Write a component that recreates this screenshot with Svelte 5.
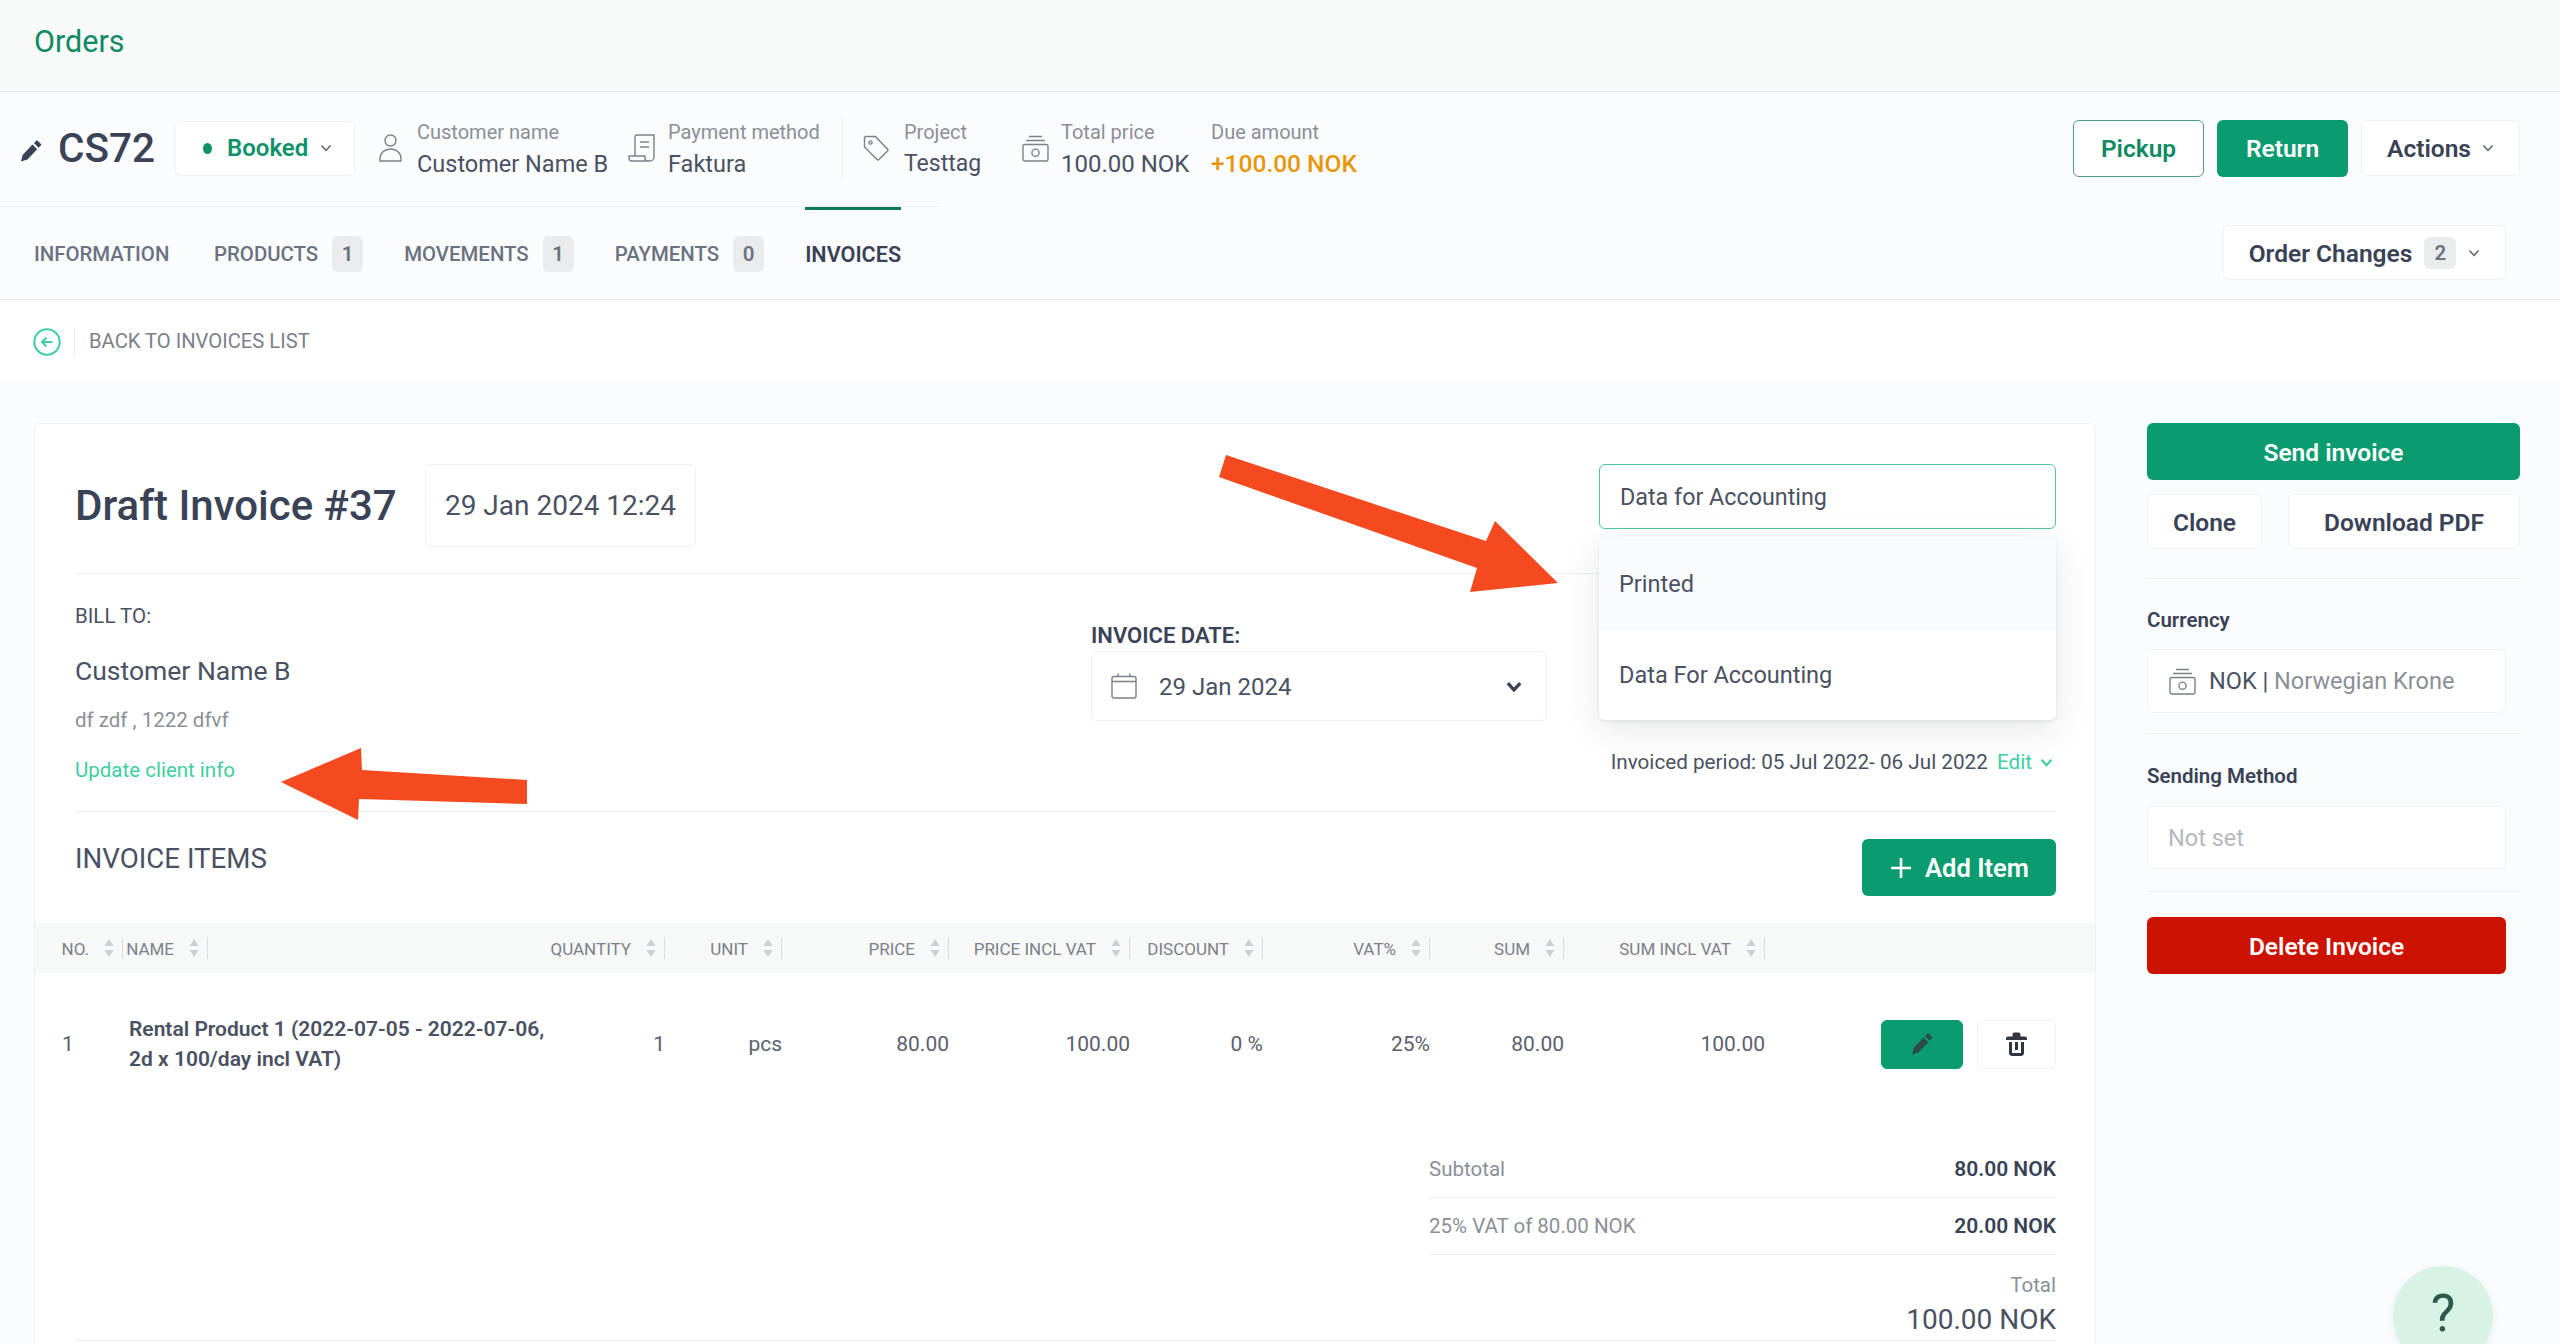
<script lang="ts">
  const tabs = [
    { label: "INFORMATION" },
    { label: "PRODUCTS", count: 1 },
    { label: "MOVEMENTS", count: 1 },
    { label: "PAYMENTS", count: 0 },
    { label: "INVOICES", active: true },
  ];

  const columns = ["NO.", "NAME", "QUANTITY", "UNIT", "PRICE", "PRICE INCL VAT", "DISCOUNT", "VAT%", "SUM", "SUM INCL VAT"];
  const cells = ["1", "pcs", "80.00", "100.00", "0 %", "25%", "80.00", "100.00"];
</script>

{#snippet chevron(cls = "")}
  <svg class="chevron {cls}" viewBox="0 0 12 8" aria-hidden="true"><path d="M1.5 1.5 6 6.5l4.5-5" /></svg>
{/snippet}

{#snippet pencil(cls = "")}
  <svg class={cls} viewBox="0 0 22 22" aria-hidden="true">
    <path d="M1 21.5 2.6 15 12.5 4.6l4.7 4.6-9.8 10.3z" />
    <path d="M14 3 16.3.7a1 1 0 0 1 1.4 0l3.3 3.2a1 1 0 0 1 0 1.4l-2.4 2.4z" />
  </svg>
{/snippet}

{#snippet money()}
  <svg class="line-icon money" viewBox="0 0 27 27" aria-hidden="true">
    <path d="M7 1.5h13M4 5.5h19" />
    <rect x="1" y="9.5" width="25" height="16.5" rx="2" />
    <circle cx="13.5" cy="17.7" r="3.6" />
  </svg>
{/snippet}

<div class="page">
  <header class="topbar">Orders</header>

  <section class="order-head">
    <div class="order-id">
      {@render pencil("id-pencil")}
      <span>CS72</span>
    </div>
    <button type="button" class="status"><i></i>Booked {@render chevron("small")}</button>

    <div class="meta customer">
      <svg class="line-icon" width="23" height="28" viewBox="0 0 23 28" aria-hidden="true">
        <circle cx="11.5" cy="6.5" r="5.5" />
        <path d="M1 27v-2.500C1 19 5.500 15 11.500 15S22 19 22 24.500V27z" />
      </svg>
      <div><small>Customer name</small><strong>Customer Name B</strong></div>
    </div>
    <div class="meta payment">
      <svg class="line-icon" width="27" height="28" viewBox="0 0 27 28" aria-hidden="true">
        <path d="M7 22V3a2 2 0 0 1 2-2h17v22a4 4 0 0 1-4 4H4a3 3 0 0 1-3-3v-2h16v2a3 3 0 0 0 3 3" />
        <path d="M12 8h9M12 13h9" />
      </svg>
      <div><small>Payment method</small><strong>Faktura</strong></div>
    </div>
    <div class="meta project">
      <svg class="line-icon" width="26" height="26" viewBox="0 0 26 26" aria-hidden="true">
        <path d="M2.500 1.500h9.800L24.500 14a1.500 1.500 0 0 1 0 2L16 24.500a1.500 1.500 0 0 1-2 0L1.500 12V2.500z" />
        <circle cx="7.500" cy="7.500" r="1.600" />
      </svg>
      <div><small>Project</small><strong>Testtag</strong></div>
    </div>
    <div class="meta price">
      {@render money()}
      <div><small>Total price</small><strong>100.00 NOK</strong></div>
    </div>
    <div class="meta due">
      <div><small>Due amount</small><strong class="amount">+100.00 NOK</strong></div>
    </div>

    <div class="order-actions">
      <button type="button" class="btn outline">Pickup</button>
      <button type="button" class="btn solid">Return</button>
      <button type="button" class="btn plain">Actions {@render chevron("small")}</button>
    </div>
  </section>

  <nav class="tabs">
    <ul>
      {#each tabs as tab}
        <li class:active={tab.active}>
          {tab.label}
          {#if tab.count !== undefined}<span class="badge">{tab.count}</span>{/if}
        </li>
      {/each}
    </ul>
    <button type="button" class="btn plain changes">Order Changes <span class="badge">2</span> {@render chevron("small")}</button>
  </nav>

  <div class="backbar">
    <svg width="28" height="28" viewBox="0 0 28 28" aria-hidden="true">
      <circle cx="14" cy="14" r="12.700" />
      <path d="M19.500 14h-10M13.500 9.500 9 14l4.500 4.500" />
    </svg>
    <span>BACK TO INVOICES LIST</span>
  </div>

  <main class="content">
    <article class="card">
      <section class="card-head">
        <h1>Draft Invoice #37</h1>
        <div class="created">29 Jan 2024 12:24</div>
        <div class="status-select">
          <div class="select-value">Data for Accounting</div>
          <ul class="select-menu">
            <li class="hover">Printed</li>
            <li>Data For Accounting</li>
          </ul>
        </div>
      </section>

      <section class="bill">
        <div class="bill-to">
          <p class="caption">BILL TO:</p>
          <p class="client">Customer Name B</p>
          <p class="address">df zdf , 1222 dfvf</p>
          <p class="update">Update client info</p>
        </div>
        <div class="invoice-date">
          <label for="invoice-date">INVOICE DATE:</label>
          <div class="date-field" id="invoice-date">
            <svg class="line-icon" width="26" height="26" viewBox="0 0 26 26" aria-hidden="true">
              <rect x="1" y="3.500" width="24" height="21.500" rx="2" />
              <path d="M1 8.500h24M7 0.500v3M19 0.500v3" />
            </svg>
            <span>29 Jan 2024</span>
            <svg class="chevron bold" viewBox="0 0 12 8" aria-hidden="true"><path d="M1.500 1.500 6 6.500l4.500-5" /></svg>
          </div>
        </div>
        <div class="period">
          Invoiced period: 05 Jul 2022- 06 Jul 2022 <span>Edit</span>
          {@render chevron("green")}
        </div>
      </section>

      <section class="items-head">
        <h2>INVOICE ITEMS</h2>
        <button type="button" class="btn solid add">
          <svg width="24" height="24" viewBox="0 0 24 24" aria-hidden="true"><path d="M12 2v20M2 12h20" /></svg>
          Add Item
        </button>
      </section>

      <div class="table-head">
        {#each columns as column}
          <div class="th">
            <span>{column}</span>
            <svg width="10" height="20" viewBox="0 0 10 20" aria-hidden="true">
              <path d="M5 1l4.500 7H.5z" />
              <path d="M5 19l4.500-7H.5z" />
            </svg>
          </div>
        {/each}
      </div>

      <div class="table-row">
        <span class="no">1</span>
        <strong class="name">Rental Product 1 (2022-07-05 - 2022-07-06, 2d x 100/day incl VAT)</strong>
        {#each cells as cell}
          <span class="num">{cell}</span>
        {/each}
        <div class="row-actions">
          <button type="button" class="icon-btn edit" aria-label="Edit">{@render pencil("row-pencil")}</button>
          <button type="button" class="icon-btn" aria-label="Delete">
            <svg width="23" height="25" viewBox="0 0 23 25" aria-hidden="true">
              <path d="M1 6.500a2 2 0 0 1 2-2h4.500V2.500a2 2 0 0 1 2-2h4a2 2 0 0 1 2 2v2H20a2 2 0 0 1 2 2v1.500H1z" />
              <path d="M4 10v10.500a3.500 3.500 0 0 0 3.500 3.500h8a3.500 3.500 0 0 0 3.500-3.500V10h-3v10.500a.6.6 0 0 1-.6.6H7.600a.6.6 0 0 1-.6-.6V10zM10 10h3v8h-3z" />
            </svg>
          </button>
        </div>
      </div>

      <div class="totals">
        <div class="total-line"><span>Subtotal</span><strong>80.00 NOK</strong></div>
        <div class="total-line"><span>25% VAT of 80.00 NOK</span><strong>20.00 NOK</strong></div>
        <div class="grand"><span>Total</span><b>100.00 NOK</b></div>
      </div>
    </article>

    <aside class="side">
      <button type="button" class="btn solid wide">Send invoice</button>
      <div class="side-row">
        <button type="button" class="btn plain clone">Clone</button>
        <button type="button" class="btn plain download">Download PDF</button>
      </div>
      <hr class="first" />
      <h3>Currency</h3>
      <div class="side-field">{@render money()}<span>NOK | <em>Norwegian Krone</em></span></div>
      <hr />
      <h3 class="sending">Sending Method</h3>
      <div class="side-field muted">Not set</div>
      <hr class="last" />
      <button type="button" class="btn danger">Delete Invoice</button>
    </aside>
  </main>

  <svg class="arrows" width="2560" height="1344" viewBox="0 0 2560 1344" aria-hidden="true">
    <path d="M281 782 361 748 362 770 527 780 527 804 359 799 358 820z" />
    <path d="M1226 455 1219 477 1477 568 1470 592 1558 583 1495 521 1486 541z" />
  </svg>

  <div class="help"><span>?</span></div>
</div>

<style>
  :global(body) {
    margin: 0;
    background: #fbfcfd;
  }

  .page {
    position: relative;
    height: 1344px;
    overflow: hidden;
    color: #4a5162;
    font-family: Roboto, "Noto Sans", sans-serif;
    font-size: 21px;
  }

  button {
    font: inherit;
    cursor: pointer;
  }

  p,
  h1,
  h2,
  h3,
  ul {
    margin: 0;
    padding: 0;
    font-weight: inherit;
    list-style: none;
  }

  svg {
    display: block;
    flex: none;
  }

  .line-icon {
    fill: none;
    stroke: #7c8089;
    stroke-width: 1.400;
  }

  .money {
    width: 27px;
    height: 27px;
  }

  .chevron {
    fill: none;
    stroke: #5b6170;
    stroke-width: 1.500;
    width: 12px;
    height: 8px;
  }

  .chevron.bold {
    width: 18px;
    height: 11px;
    stroke: #3a4256;
    stroke-width: 2.400;
  }

  .chevron.green {
    stroke: #3ccf9f;
    stroke-width: 2;
    width: 13px;
    height: 9px;
  }

  .topbar {
    box-sizing: border-box;
    height: 92px;
    padding: 26px 0 0 34px;
    border-bottom: 1px solid #e4e5e7;
    background: #f8f9f9;
    color: #0f8a63;
    font-size: 30.500px;
    line-height: 32px;
  }

  .order-head {
    display: flex;
    align-items: center;
    box-sizing: border-box;
    height: 114px;
    padding: 0 40px 2px 20px;
  }

  .order-id {
    display: flex;
    align-items: center;
    gap: 16px;
    width: 155px;
    color: #3a4256;
    font-size: 40.500px;
    font-weight: 500;
  }

  .id-pencil {
    width: 22px;
    height: 22px;
    margin-top: 6px;
    fill: #3a4256;
  }

  .status {
    display: flex;
    align-items: center;
    box-sizing: border-box;
    width: 180px;
    height: 55px;
    margin-right: 24px;
    padding: 0 0 0 27px;
    border: 1px solid #f1f2f4;
    border-radius: 6px;
    background: #fff;
    color: #0f9268;
    font-size: 24px;
    font-weight: 600;
  }

  .status i {
    width: 9px;
    height: 11px;
    margin-right: 15px;
    border-radius: 50%;
    background: #0f9268;
  }

  .status .chevron {
    margin-left: 12px;
  }

  .meta {
    display: flex;
    align-items: center;
    gap: 15px;
    box-sizing: border-box;
  }

  .meta small,
  .meta strong {
    display: block;
    white-space: nowrap;
    line-height: 32px;
  }

  .meta small {
    color: #8b8f98;
    font-size: 20px;
  }

  .meta strong {
    font-size: 23.500px;
    font-weight: 400;
  }

  .customer {
    width: 249px;
  }

  .payment {
    width: 214px;
    gap: 13px;
  }

  .project {
    position: relative;
    width: 180px;
    padding-left: 20px;
    border-left: 1px solid #edeef0;
  }

  .project strong {
    font-size: 23px;
  }

  .price {
    width: 189px;
    gap: 12px;
  }

  .meta.price strong {
    font-size: 24px;
  }

  .meta strong.amount {
    color: #e8960c;
    font-size: 24.500px;
    font-weight: 500;
  }

  .order-actions {
    display: flex;
    gap: 13px;
    margin-left: auto;
  }

  .btn {
    display: flex;
    align-items: center;
    justify-content: center;
    box-sizing: border-box;
    padding: 1px 0 0;
    border: 1px solid transparent;
    border-radius: 6px;
    font-size: 24.500px;
    font-weight: 600;
    white-space: nowrap;
  }

  .btn.outline {
    width: 131px;
    height: 57px;
    border-color: #4e9c84;
    background: #fff;
    color: #0f8a63;
  }

  .btn.solid {
    background: #0a9b6f;
    color: #fff;
  }

  .order-actions .solid {
    width: 131px;
    height: 57px;
  }

  .btn.plain {
    border-color: #f0f1f3;
    background: #fff;
    color: #3a4256;
  }

  .order-actions .plain {
    gap: 11px;
    width: 159px;
    height: 56px;
  }

  .tabs {
    display: flex;
    justify-content: space-between;
    box-sizing: border-box;
    height: 94px;
    padding-right: 54px;
    border-bottom: 1px solid #e9eaec;
  }

  .tabs ul {
    display: flex;
    gap: 41px;
    box-sizing: border-box;
    width: 939px;
    height: 93px;
    padding: 0 0 0 34px;
    border-top: 1px solid #eceef0;
  }

  .tabs li {
    position: relative;
    display: flex;
    align-items: center;
    gap: 14px;
    padding-top: 2px;
    color: #6b7280;
    font-size: 20.400px;
    font-weight: 500;
    white-space: nowrap;
  }

  .tabs li:first-child {
    min-width: 139px;
  }

  .tabs li.active {
    color: #3a4256;
    font-size: 21.600px;
    font-weight: 600;
  }

  .tabs li.active::before {
    content: "";
    position: absolute;
    top: 0;
    left: 0;
    right: 0;
    height: 3px;
    background: #0f7d5c;
  }

  .badge {
    display: inline-flex;
    align-items: center;
    justify-content: center;
    width: 31px;
    height: 36px;
    border-radius: 6px;
    background: #e9ebec;
    color: #6b7280;
    font-weight: 600;
    font-size: 20.500px;
  }

  .changes {
    gap: 12px;
    width: 283px;
    height: 55px;
    margin-top: 19px;
  }

  .changes .badge {
    width: 32px;
    height: 32px;
  }

  .backbar {
    display: flex;
    align-items: center;
    box-sizing: border-box;
    height: 83px;
    padding-left: 33px;
    background: #fff;
    color: #7c8089;
    font-size: 20.200px;
  }

  .backbar svg {
    fill: none;
    stroke: #3fcf9f;
    stroke-width: 2;
  }

  .backbar span {
    margin-left: 13px;
    padding-left: 14px;
    line-height: 27px;
    border-left: 1px solid #e9eaec;
  }

  .content {
    display: grid;
    grid-template-columns: 2062px 373px;
    gap: 51px;
    padding: 40px 0 0 34px;
  }

  .card {
    box-sizing: border-box;
    height: 1000px;
    border: 1px solid #eff0f2;
    border-radius: 6px;
    background: #fff;
  }

  .card-head {
    display: flex;
    box-sizing: border-box;
    height: 150px;
    margin: 0 39px 0 40px;
    padding-top: 40px;
    border-bottom: 1px solid #eceef0;
  }

  h1 {
    width: 335px;
    margin-right: 15px;
    color: #3a4256;
    font-size: 42px;
    font-weight: 500;
    line-height: 84px;
    white-space: nowrap;
  }

  .created {
    display: flex;
    align-items: center;
    justify-content: center;
    box-sizing: border-box;
    width: 271px;
    height: 83px;
    border: 1px solid #eff0f2;
    border-radius: 6px;
    font-size: 28px;
  }

  .status-select {
    position: relative;
    width: 457px;
    margin-left: auto;
    z-index: 2;
  }

  .select-value {
    display: flex;
    align-items: center;
    box-sizing: border-box;
    height: 65px;
    padding-left: 20px;
    border: 1px solid #4ec9a0;
    border-radius: 6px;
    background: #fff;
    font-size: 23.300px;
  }

  .select-menu {
    position: absolute;
    top: 73px;
    left: 0;
    right: 0;
    overflow: hidden;
    border-radius: 6px;
    background: #fff;
    box-shadow: 0 10px 34px rgba(40, 50, 60, 0.12), 0 1px 3px rgba(40, 50, 60, 0.1);
  }

  .select-menu li {
    display: flex;
    align-items: center;
    height: 90px;
    padding-left: 20px;
    font-size: 23.500px;
  }

  .select-menu .hover {
    height: 93px;
    background: #f9fbfc;
  }

  .bill {
    display: grid;
    grid-template-columns: 1016px 456px 509px;
    box-sizing: border-box;
    height: 238px;
    margin: 0 39px 0 40px;
    border-bottom: 1px solid #eceef0;
  }

  .bill-to {
    padding-top: 28px;
  }

  .caption {
    font-size: 20.500px;
    line-height: 28px;
  }

  .client {
    margin-top: 24px;
    font-size: 26.500px;
    line-height: 34px;
  }

  .address {
    margin-top: 20px;
    color: #8b8f98;
    font-size: 20.500px;
    line-height: 24px;
  }

  .update {
    margin-top: 26px;
    color: #3ccf9f;
    font-size: 20.500px;
    line-height: 24px;
  }

  .invoice-date {
    padding-top: 49px;
  }

  label {
    display: block;
    margin-bottom: 2px;
    color: #3a4256;
    font-size: 22px;
    font-weight: 600;
    line-height: 26px;
  }

  .date-field {
    display: flex;
    align-items: center;
    box-sizing: border-box;
    height: 70px;
    padding: 0 23px 0 19px;
    border: 1px solid #eff0f2;
    border-radius: 6px;
    font-size: 24px;
  }

  .date-field span {
    margin-left: 22px;
    margin-right: auto;
    padding-top: 1px;
  }

  .period {
    display: flex;
    align-items: center;
    justify-content: flex-end;
    gap: 4px;
    height: 24px;
    padding: 176px 3px 0 0;
    font-size: 20.700px;
    line-height: 24px;
    white-space: pre;
  }

  .period span {
    margin-right: 4px;
    color: #3ccf9f;
  }

  .items-head {
    display: flex;
    align-items: flex-start;
    justify-content: space-between;
    box-sizing: border-box;
    height: 111px;
    margin: 0 39px 0 40px;
    padding-top: 27px;
  }

  h2 {
    margin-top: 3px;
    font-size: 27.700px;
    line-height: 34px;
  }

  .btn.add {
    gap: 12px;
    width: 194px;
    height: 57px;
    padding: 0;
    font-size: 25.500px;
  }

  .add svg {
    fill: none;
    stroke: #fff;
    stroke-width: 2.600;
  }

  .table-head,
  .table-row {
    display: grid;
    align-items: center;
    padding-left: 27px;
  }

  .table-head {
    grid-template-columns: 61px 85px 457px 117px 167px 181px 133px 167px 134px 201px;
    height: 50px;
    background: #f7f8f8;
    color: #7c8089;
    font-size: 17px;
  }

  .th {
    display: flex;
    align-items: center;
    justify-content: flex-end;
    gap: 15px;
    height: 21px;
    padding-right: 8px;
    border-right: 1px solid #d9dbde;
    white-space: nowrap;
  }

  .th span {
    padding-top: 2px;
  }

  .th svg {
    fill: #cdd0d3;
  }

  .table-row {
    grid-template-columns: 61px 430px 112px 117px 167px 181px 133px 167px 134px 201px 1fr;
    height: 142px;
    padding-right: 39px;
    color: #5a606e;
    font-size: 21px;
  }

  .name {
    box-sizing: border-box;
    width: 430px;
    padding-left: 6px;
    color: #4a5162;
    font-size: 21px;
    font-weight: 600;
    line-height: 30px;
  }

  .num {
    text-align: right;
  }

  .row-actions {
    display: flex;
    justify-content: flex-end;
    gap: 14px;
  }

  .icon-btn {
    display: flex;
    align-items: center;
    justify-content: center;
    box-sizing: border-box;
    width: 79px;
    height: 49px;
    padding: 0;
    border: 1px solid #eff0f2;
    border-radius: 6px;
    background: #fff;
    fill: #2f3640;
  }

  .icon-btn.edit {
    width: 82px;
    border-color: #0a9b6f;
    background: #0a9b6f;
  }

  .row-pencil {
    width: 22px;
    height: 22px;
    fill: #2f4a48;
  }

  .totals {
    margin: 26px 39px 0 1394px;
    font-size: 20.500px;
  }

  .total-line {
    display: flex;
    justify-content: space-between;
    align-items: center;
    height: 56px;
    border-bottom: 1px solid #eceef0;
    color: #8b8f98;
  }

  .total-line strong {
    color: #3a4256;
    font-size: 21px;
    font-weight: 600;
  }

  .grand {
    display: flex;
    flex-direction: column;
    align-items: flex-end;
    margin-top: 16px;
    color: #8b8f98;
    line-height: 28px;
  }

  .grand b {
    color: #4a5162;
    font-size: 28px;
    font-weight: 400;
    line-height: 41px;
  }

  .card::after {
    content: "";
    display: block;
    height: 1px;
    margin: 0 39px 0 40px;
    background: #eceef0;
  }

  .side {
    width: 373px;
  }

  .wide {
    width: 100%;
    height: 57px;
  }

  .side-row {
    display: flex;
    justify-content: space-between;
    margin-top: 14px;
  }

  .side-row .btn {
    height: 55px;
  }

  .clone {
    width: 115px;
  }

  .download {
    width: 232px;
  }

  hr {
    height: 1px;
    margin: 20px 0 0;
    border: 0;
    background: #eceef0;
  }

  hr.first {
    margin-top: 29px;
  }

  hr.last {
    margin-top: 22px;
  }

  h3 {
    margin: 28px 0 16px;
    padding-top: 1px;
    color: #3a4256;
    font-size: 20.500px;
    font-weight: 600;
    line-height: 25px;
  }

  h3.sending {
    margin: 29px 0 17px;
  }

  .side-field {
    display: flex;
    align-items: center;
    gap: 13px;
    box-sizing: border-box;
    width: 359px;
    height: 64px;
    padding-left: 21px;
    border: 1px solid #f0f1f3;
    border-radius: 6px;
    background: #fff;
    font-size: 23.500px;
  }

  .side-field em {
    color: #8b8f98;
    font-style: normal;
  }

  .side-field.muted {
    height: 63px;
    padding-left: 20px;
    color: #b5b8bd;
  }

  .danger {
    width: 359px;
    height: 57px;
    margin-top: 25px;
    background: #cc1200;
    color: #fff;
  }

  .arrows {
    position: absolute;
    top: 0;
    left: 0;
    z-index: 3;
    fill: #f54a20;
    pointer-events: none;
  }

  .help {
    position: absolute;
    top: 1266px;
    left: 2393px;
    z-index: 4;
    width: 100px;
    height: 100px;
    border-radius: 50%;
    background: #d7f3e4;
    box-shadow: 0 2px 10px rgba(40, 50, 60, 0.08);
    color: #2a5a4c;
    font-size: 52px;
    text-align: center;
  }

  .help span {
    display: block;
    margin-top: 20px;
    line-height: 56px;
  }
</style>
